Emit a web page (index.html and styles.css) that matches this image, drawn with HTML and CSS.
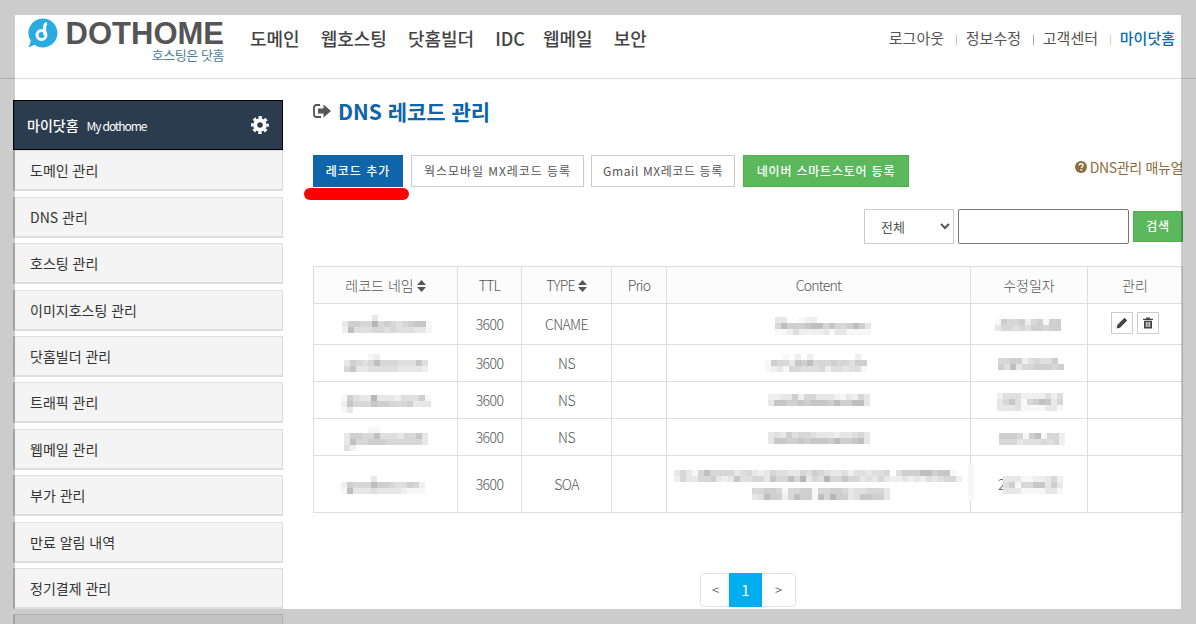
FILE: index.html
```html
<!DOCTYPE html>
<html lang="ko">
<head>
<meta charset="utf-8">
<title>DNS 레코드 관리</title>
<link rel="stylesheet" href="styles.css">
</head>
<body>
<header class="topbar">
  <a class="logo">
    <svg class="logo-mark" viewBox="0 0 30 30" width="30" height="30">
      <path d="M15 .5a14.5 14.5 0 1 1-8.6 26.2L.5 29.5l2.3-6.6A14.5 14.5 0 0 1 15 .5z" fill="#29abe2"/>
      <path d="M19 5.5c-1.6.3-2.3 1.500-2.300 3v8.500" fill="none" stroke="#fff" stroke-width="3"/>
      <circle cx="13.500" cy="17" r="4.500" fill="none" stroke="#fff" stroke-width="3"/>
    </svg>
    <span class="logo-text">
      <span class="logo-name">DOTHOME</span>
      <span class="logo-slogan">호스팅은 닷홈</span>
    </span>
  </a>
  <nav class="mainnav">
    <a>도메인</a><a>웹호스팅</a><a>닷홈빌더</a><a class="nav-idc">IDC</a><a>웹메일</a><a>보안</a>
  </nav>
  <nav class="usernav">
    <a>로그아웃</a><i class="sep sep-blue"></i><a>정보수정</a><i class="sep sep-purple"></i><a>고객센터</a><i class="sep sep-tan"></i><a class="current">마이닷홈</a>
  </nav>
</header>

<div class="layout">
  <aside class="sidebar">
    <div class="side-head">
      <strong>마이닷홈</strong><span>My dothome</span>
      <svg class="gear" viewBox="0 0 18 18" width="18" height="18">
        <circle cx="9" cy="9" r="4.800" fill="none" stroke="#fff" stroke-width="4"/>
        <circle cx="9" cy="9" r="7.600" fill="none" stroke="#fff" stroke-width="2.600" stroke-dasharray="3.400 2.570" stroke-dashoffset="1.700"/>
      </svg>
    </div>
    <ul class="side-list">
      <li>도메인 관리</li>
      <li>DNS 관리</li>
      <li>호스팅 관리</li>
      <li>이미지호스팅 관리</li>
      <li>닷홈빌더 관리</li>
      <li>트래픽 관리</li>
      <li>웹메일 관리</li>
      <li>부가 관리</li>
      <li>만료 알림 내역</li>
      <li>정기결제 관리</li>
      <li></li>
    </ul>
  </aside>

  <main class="content">
    <h1 class="title">
      <svg class="title-icon" viewBox="0 0 18 16" width="18" height="16">
        <path d="M7 2H3.500C2.100 2 1 3.100 1 4.500v7C1 12.900 2.100 14 3.500 14H8" fill="none" stroke="#555" stroke-width="1.800"/>
        <path d="M10.500 1.500 18 8l-7.500 6.500v-4H5v-5h5.500z" fill="#555"/>
      </svg>
      DNS 레코드 관리
    </h1>

    <div class="toolbar">
      <button class="btn btn-blue btn-add">레코드 추가</button>
      <button class="btn btn-works">웍스모바일 MX레코드 등록</button>
      <button class="btn btn-gmail">Gmail MX레코드 등록</button>
      <button class="btn btn-green btn-naver">네이버 스마트스토어 등록</button>
      <span class="mark"></span>
      <a class="manual">
        <svg viewBox="0 0 12 12" width="12" height="12"><circle cx="6" cy="6" r="6" fill="#8b6d3f"/><path d="M4 4.600C4 3.400 4.900 2.700 6 2.700s2 .7 2 1.800c0 1.500-1.600 1.500-1.600 2.500" fill="none" stroke="#fff" stroke-width="1.400"/><rect x="5.500" y="8" width="1.700" height="1.600" fill="#fff"/></svg>
        DNS관리 매뉴얼
      </a>
    </div>

    <form class="search">
      <select class="search-type"><option>전체</option></select>
      <input class="search-input" type="text">
      <button class="btn btn-green btn-search" type="button">검색</button>
    </form>

    <table class="records">
      <colgroup>
        <col class="c-name"><col class="c-ttl"><col class="c-type"><col class="c-prio"><col class="c-content"><col class="c-date"><col class="c-manage">
      </colgroup>
      <thead>
        <tr>
          <th>레코드 네임<svg class="sort" viewBox="0 0 9 12" width="9" height="12"><path d="M4.500 0 9 5H0zM0 7h9l-4.500 5z"/></svg></th>
          <th class="latin">TTL</th>
          <th class="latin">TYPE<svg class="sort" viewBox="0 0 9 12" width="9" height="12"><path d="M4.500 0 9 5H0zM0 7h9l-4.500 5z"/></svg></th>
          <th class="latin">Prio</th>
          <th class="latin">Content</th>
          <th>수정일자</th>
          <th>관리</th>
        </tr>
      </thead>
      <tbody>
        <tr class="r-tall">
          <td></td><td>3600</td><td>CNAME</td><td></td><td></td><td></td>
          <td class="actions">
            <span class="act"><svg viewBox="0 0 12 12" width="12" height="12"><path d="M8.500.8 11.200 3.500 4 10.700.6 11.400 1.300 8z" fill="#444"/></svg></span>
            <span class="act"><svg viewBox="0 0 12 12" width="12" height="12"><path d="M4.200 1.800V.6h3.600v1.200H11V3H1V1.800zM2 3.800h8V11.400H2zM3.800 5v5h.9V5zM5.600 5v5h.9V5zM7.300 5v5h.9V5z" fill="#444" fill-rule="evenodd"/></svg></span>
          </td>
        </tr>
        <tr><td></td><td>3600</td><td>NS</td><td></td><td></td><td></td><td></td></tr>
        <tr><td></td><td>3600</td><td>NS</td><td></td><td></td><td></td><td></td></tr>
        <tr><td></td><td>3600</td><td>NS</td><td></td><td></td><td></td><td></td></tr>
        <tr class="r-soa"><td></td><td>3600</td><td>SOA</td><td></td><td></td><td class="date-soa">2</td><td></td></tr>
      </tbody>
    </table>

    <div class="pager">
      <a class="page-prev">&lt;</a><a class="page-on">1</a><a class="page-next">&gt;</a>
    </div>
  </main>
</div>

<svg id="redactions" class="redactions" viewBox="0 0 1196 624" width="1196" height="624" shape-rendering="crispEdges"></svg>
<div class="dim"></div>
<script src="mosaic.js"></script>
</body>
</html>
```
FILE: styles.css
```css
* { box-sizing: border-box; }
html, body { margin: 0; height: 100%; }
body {
  position: relative;
  width: 1196px;
  height: 624px;
  overflow: hidden;
  background: #fff;
  color: #444;
  font-family: "Noto Sans CJK KR", "Noto Sans", sans-serif;
  font-size: 14px;
}
a { color: inherit; text-decoration: none; }

/* top bar */
.topbar {
  display: flex;
  align-items: flex-start;
  height: 79px;
  padding: 17px 21px 0 28px;
  border-bottom: 1px solid #ddd;
}
.logo { display: flex; width: 197px; flex: none; }
.logo-mark { flex: none; margin-top: 1px; }
.logo-text { display: flex; flex-direction: column; align-items: flex-end; margin-left: 7px; width: 159px; }
.logo-name {
  font-family: "Liberation Sans", sans-serif;
  font-weight: 700;
  font-size: 31px;
  line-height: 29px;
  margin-top: 2px;
  color: #555;
}
.logo-slogan { font-size: 13px; line-height: 14px; color: #4c7f9e; letter-spacing: -.45px; }
.mainnav { display: flex; gap: 21px; margin-left: 25px; font-size: 18px; font-weight: 500; line-height: 26px; padding-top: 8px; color: #444; }
.nav-idc { margin-right: -3px; }
.usernav { display: flex; align-items: center; margin-left: auto; font-size: 15px; line-height: 22px; padding-top: 10px; color: #555; }
.sep { width: 1px; height: 10px; margin: 3px 9px 0 11.800px; }
.sep-blue { background: #a9cdeb; }
.sep-purple { background: #b9a3c4; }
.sep-tan { background: #e0cba8; }
.current { color: #0d6cb0; font-weight: 500; }

/* page body */
.layout { display: flex; padding: 21px 0 0 13px; }
.sidebar { width: 270px; flex: none; }
.side-head {
  display: flex;
  align-items: center;
  height: 50px;
  padding: 0 13px 0 13px;
  background: #2b3c4e;
  border: 1px solid #000;
  color: #fff;
}
.side-head strong { font-size: 14px; font-weight: 500; }
.side-head span { margin-left: 8px; font-size: 12px; letter-spacing: -1.100px; }
.gear { margin-left: auto; margin-top: -1px; }
.side-list { list-style: none; margin: 0; padding: .4px 0 0; display: flex; flex-direction: column; gap: 5.400px; }
.side-list li {
  height: 41px;
  padding-left: 15px;
  line-height: 38px;
  color: #333;
  background: #f4f4f4;
  border: 1px solid #ddd;
  border-bottom-width: 2px;
  border-left: 2px solid #ccc;
}

.content { position: relative; width: 870px; margin-left: 30px; flex: none; }
.title {
  display: flex;
  align-items: center;
  gap: 7px;
  height: 24px;
  margin: -1px 0 0;
  font-size: 21px;
  font-weight: 700;
  line-height: 24px;
  color: #0d64a8;
}

.toolbar { position: relative; display: flex; margin-top: 32px; height: 32px; }
.btn {
  height: 32px;
  padding: 0 0 2px;
  font-family: inherit;
  font-size: 12px;
  letter-spacing: .75px;
  border: 1px solid #ccc;
  background: #fff;
  color: #555;
}
.btn-blue { background: #0f65aa; border-color: #0f65aa; color: #fff; font-weight: 500; }
.btn-green { background: #5cb85c; border-color: #4cae4c; color: #fff; font-weight: 500; }
.btn-add { width: 90px; margin-right: 8px; letter-spacing: .95px; }
.btn-works { width: 173px; margin-right: 7px; letter-spacing: .95px; }
.btn-gmail { width: 144px; margin-right: 8px; letter-spacing: .6px; }
.btn-naver { width: 166px; letter-spacing: .8px; }
.mark { position: absolute; left: -9px; top: 33px; width: 105px; height: 12px; border-radius: 6px; background: #f00; }
.manual {
  display: flex;
  align-items: center;
  gap: 3px;
  margin-left: auto;
  height: 24px;
  font-size: 14px;
  letter-spacing: -.35px;
  color: #8b6d3f;
}

.search { display: flex; justify-content: flex-end; align-items: center; height: 35px; margin-top: 22px; }
.search-type {
  width: 90px;
  height: 35px;
  padding-left: 12px;
  font-family: inherit;
  font-size: 13px;
  color: #555;
  background: #fff;
  border: 1px solid #ccc;
  border-radius: 0;
}
.search-input { width: 171px; height: 35px; margin-left: 4px; border: 1px solid #777; border-radius: 2px; background: #fff; }
.btn-search { width: 50px; height: 31px; margin-left: 4px; font-size: 12px; }

.records {
  table-layout: fixed;
  border-collapse: collapse;
  width: 869px;
  margin-top: 22px;
  font-weight: 300;
  color: #555;
  text-align: center;
}
.c-name { width: 144px; }
.c-ttl { width: 64px; }
.c-type { width: 90px; }
.c-prio { width: 55px; }
.c-content { width: 304px; }
.c-date { width: 117px; }
.c-manage { width: 95px; }
.records th, .records td { padding: 1px 0 0; border: 1px solid #ddd; font-size: 14px; font-weight: 300; line-height: 19px; }
.records th { height: 37px; background: #fcfcfc; }
.records td { height: 37px; letter-spacing: -.6px; }
.records .latin { letter-spacing: -.8px; }
.records .r-tall td { height: 41px; }
.records .r-soa td { height: 57px; }
.records .date-soa { text-align: left; padding-left: 27px; }
.sort { margin-left: 3px; vertical-align: -1px; fill: #555; }
.records .actions { font-size: 0; padding: 3px 1px 0 0; }
.act {
  display: inline-flex;
  align-items: center;
  justify-content: center;
  width: 22px;
  height: 22px;
  margin: 0 2px;
  border: 1px solid #ccc;
}

.pager {
  display: flex;
  width: 96px;
  height: 34px;
  margin: 60px auto 0 387px;
  border: 1px solid #e2e2e2;
  border-radius: 4px;
  text-align: center;
  line-height: 32px;
  color: #777;
}
.page-prev { width: 28px; padding-left: 1px; font-size: 13px; }
.page-next { flex: 1; font-size: 13px; }
.page-on { width: 33px; height: 34px; margin-top: -1px; line-height: 34px; background: #00aeef; color: #fff; font-size: 15px; }

/* overlays */
.redactions { position: absolute; left: 0; top: 0; pointer-events: none; }
.dim { position: absolute; left: 15px; top: 15px; width: 1166px; height: 594px; box-shadow: 0 0 0 1300px rgba(0, 0, 0, .2); pointer-events: none; }
```
FILE: mosaic.js
```js
// Blurred-out (mosaic) values of the DNS table. Each digit is a grey level per 6px cell; 0 = nothing.
var blocks = [
  [342, 315, ["00000300000000", "366559565456771", "284445545444331"]],
  [344, 354, ["00001200000000", "36545855544474", "57334444433332"]],
  [341, 395, ["164339333244461", "275557665556333", "13"]],
  [344, 427, ["00001100000000", "36655844435573", "38556665555553", "42"]],
  [341, 476, ["00000300000000", "265558665446520", "183334333321110"]],
  [775, 317, ["3300122", "5866678857556863", "1124222231331111"]],
  [765, 354, ["00010202000000020", "16553768555655466", "12315544452443441"]],
  [768, 394, ["22336255333213253", "37766767776866883"]],
  [768, 432, ["34364554333233453", "37766767776866783"]],
  [674, 470, ["35315855553453235443354654334244344504666886771", "253355632374455375585935495575534353223232434552"]],
  [752, 488, ["55665155661556653445553", "34866258661859663477663"]],
  [995, 319, ["16556256166", "35545466566"]],
  [998, 358, ["5566245446", "64835566656"]],
  [997, 393, ["24442222424", "35741568735", "33341111331"]],
  [999, 433, ["66651681552", "55534445452"]],
  [1003, 476, ["3331122352", "4615577363", "3331111331"]]
];
var svg = document.getElementById("redactions");
function cell(x, y, w, h, g) {
  var r = document.createElementNS("http://www.w3.org/2000/svg", "rect");
  r.setAttribute("x", x);
  r.setAttribute("y", y);
  r.setAttribute("width", w);
  r.setAttribute("height", h);
  r.setAttribute("fill", "rgb(" + g + "," + g + "," + g + ")");
  svg.appendChild(r);
}
blocks.forEach(function (b) {
  b[2].forEach(function (row, ry) {
    row.split("").forEach(function (d, cx) {
      var v = parseInt(d, 16);
      if (v) cell(b[0] + cx * 6, b[1] + ry * 6, 6, 6, 255 - v * 8);
    });
  });
});
// pale smear over the column line beside the long SOA value
cell(968, 464, 6, 36, 247);
```
